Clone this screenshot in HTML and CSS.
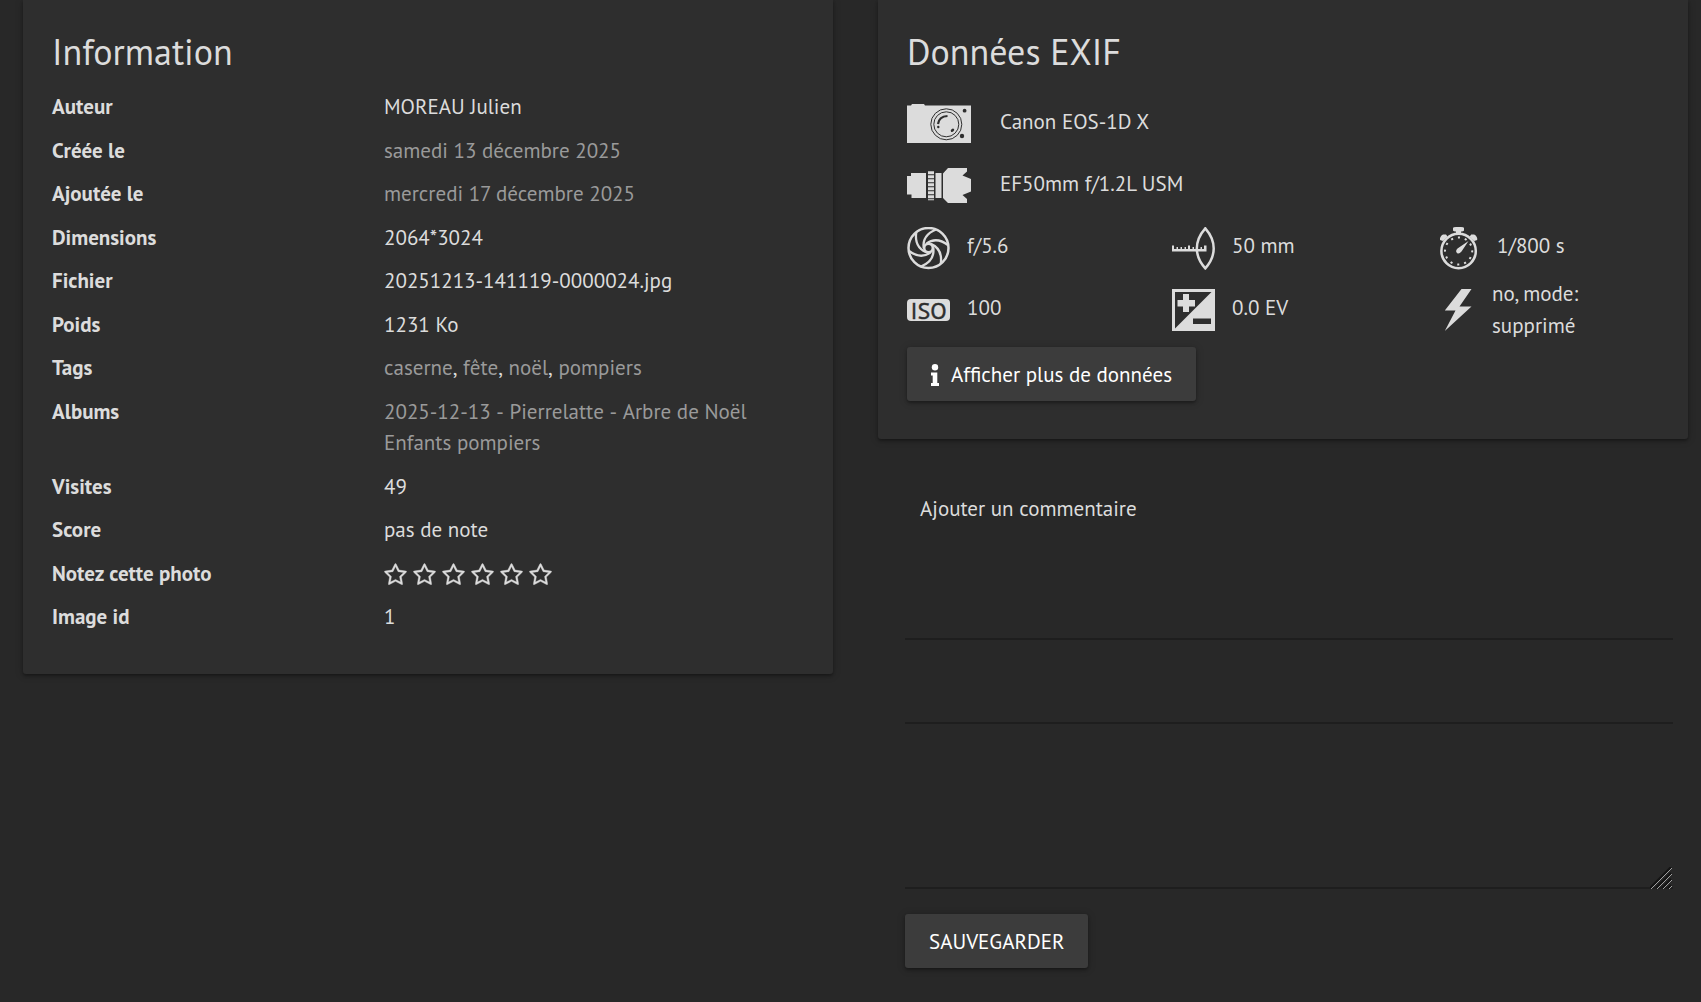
FILE: index.html
```html
<!DOCTYPE html>
<html lang="fr">
<head>
  <meta charset="utf-8">
  <meta name="viewport" content="width=device-width,initial-scale=1">
  <title>20251213-141119-0000024</title>
  <link rel="stylesheet" href="styles.css">
</head>
<body>

  <main class="infos">
    <section class="card">
      <h2>Information</h2>
      <dl class="details">
        <dt>Auteur</dt>
        <dd>MOREAU Julien</dd>
        <dt>Créée le</dt>
        <dd><a href="#">samedi 13 décembre 2025</a></dd>
        <dt>Ajoutée le</dt>
        <dd><a href="#">mercredi 17 décembre 2025</a></dd>
        <dt>Dimensions</dt>
        <dd>2064*3024</dd>
        <dt>Fichier</dt>
        <dd>20251213-141119-0000024.jpg</dd>
        <dt>Poids</dt>
        <dd>1231 Ko</dd>
        <dt>Tags</dt>
        <dd class="list"><a href="#">caserne</a>, <a href="#">fête</a>, <a href="#">noël</a>, <a href="#">pompiers</a></dd>
        <dt>Albums</dt>
        <dd class="list"><a href="#">2025-12-13 - Pierrelatte - Arbre de Noël Enfants pompiers</a></dd>
        <dt>Visites</dt>
        <dd>49</dd>
        <dt>Score</dt>
        <dd>pas de note</dd>
        <dt>Notez cette photo</dt>
        <dd class="rating">
          <button type="button" aria-label="0"><svg viewBox="0 0 1664 1792"><use href="#star"/></svg></button>
          <button type="button" aria-label="1"><svg viewBox="0 0 1664 1792"><use href="#star"/></svg></button>
          <button type="button" aria-label="2"><svg viewBox="0 0 1664 1792"><use href="#star"/></svg></button>
          <button type="button" aria-label="3"><svg viewBox="0 0 1664 1792"><use href="#star"/></svg></button>
          <button type="button" aria-label="4"><svg viewBox="0 0 1664 1792"><use href="#star"/></svg></button>
          <button type="button" aria-label="5"><svg viewBox="0 0 1664 1792"><use href="#star"/></svg></button>
        </dd>
        <dt>Image id</dt>
        <dd>1</dd>
      </dl>
    </section>

    <div class="column">
      <section class="card">
        <h2>Données EXIF</h2>

        <div class="exif">
          <div class="exif-row">
            <svg class="icon-wide" viewBox="0 0 64 40">
              <path class="fill" d="M0 1.500H4L5 0H17L18 1.500H64V39H0z"/>
              <g class="cut-line">
                <circle cx="39.300" cy="20.300" r="15.500"/>
                <circle cx="39.300" cy="20.300" r="12.500"/>
                <path stroke-width="2.200" d="M31 20Q32 12.500 40.500 12"/>
              </g>
              <g class="cut">
                <circle cx="31.300" cy="23" r="1.200"/>
                <ellipse cx="45.500" cy="26.300" rx="2" ry="1.400" transform="rotate(-45 45.500 26.300)"/>
                <circle cx="57.600" cy="6.700" r="1.900"/>
                <circle cx="55" cy="32" r="2.200"/>
              </g>
            </svg>
            <span class="exif-text">Canon EOS-1D X</span>
          </div>
          <div class="exif-row">
            <svg class="icon-wide" viewBox="0 -2 64 40">
              <path class="fill" d="M0 8H4V5H19V30H4.500V26.500H0zM28.500 5H34.500V30H28.500zM36 5.500L41 0H60V3.500L55.500 7.500L64 11V23.500L55.500 27L60 31V35H41L36 30z"/>
              <path class="ribs" d="M24 3.300V32.300"/>
            </svg>
            <span class="exif-text">EF50mm f/1.2L USM</span>
          </div>

          <div class="exif-grid">
            <div class="exif-row">
              <svg class="icon" viewBox="0 0 43 43">
                <g class="line" transform="translate(21.500 21)">
                  <circle r="20"/>
                  <circle r="4.300"/>
                  <g class="blades">
                    <path id="blade" d="M7.500 -18.500C-1 -15 -6 -9 -4.800 0"/>
                    <use href="#blade" transform="rotate(60)"/>
                    <use href="#blade" transform="rotate(120)"/>
                    <use href="#blade" transform="rotate(180)"/>
                    <use href="#blade" transform="rotate(240)"/>
                    <use href="#blade" transform="rotate(300)"/>
                  </g>
                </g>
              </svg>
              <span class="exif-text">f/5.6</span>
            </div>
            <div class="exif-row">
              <svg class="icon" viewBox="0 0 43 43">
                <path class="line" d="M33.300 1.300C22 14 22 29 33.300 41.300C44.500 29 44.500 14 33.300 1.300z"/>
                <path class="fill" d="M0 24.500V18.500H2V22H4.500V20H6V22H8.500V20H10V22H12.500V20H14V22H16V18.500H18V22H20.500V20H22V22H24.500V20H26V22H28.500V20H30V22H32V18.500H34.500V24.500z"/>
              </svg>
              <span class="exif-text">50 mm</span>
            </div>
            <div class="exif-row">
              <svg class="icon" viewBox="0 0 43 43">
                <circle class="line" cx="21.600" cy="24" r="17.200"/>
                <path class="fill" d="M16 1Q16 0 19 0H24Q27 0 27 1V3.500Q27 4 25 4.500H24V7.500H19V4.500H18Q16 4 16 3.500zM3 13Q2.500 9.500 6 7.500L9 7.500L10.500 9.500L6 14zM40.200 13Q40.700 9.500 37.200 7.500L34.200 7.500L32.700 9.500L37.200 14zM31.500 14L24.500 24.500Q22 27.500 20 26Q18 24 20.500 21.500z"/>
                <circle class="dots" cx="21.600" cy="24" r="13.600" pathLength="120"/>
              </svg>
              <span class="exif-text">1/800 s</span>
            </div>
            <div class="exif-row">
              <svg class="icon" viewBox="0 0 43 43">
                <rect class="fill" y="10" width="43" height="22" rx="4"/>
                <text class="iso" x="21.500" y="29.500">ISO</text>
              </svg>
              <span class="exif-text">100</span>
            </div>
            <div class="exif-row">
              <svg class="icon" viewBox="0 0 43 43">
                <path class="fill" fill-rule="evenodd" d="M0 0H43V42H0zM3 3V39.500L39.500 3zM21 29.500V35H39V29.500z"/>
                <path class="fill" d="M11 5H17V11H23V17.500H17V23H11V17.500H5.500V11H11z"/>
              </svg>
              <span class="exif-text">0.0 EV</span>
            </div>
            <div class="exif-row flash">
              <svg class="icon" viewBox="0 0 38 43">
                <path class="fill" d="M24.500 0H34.500L22.500 17.500H34.500L7.800 42L18.500 21.500H7.800z"/>
              </svg>
              <span class="exif-text">no, mode: supprimé</span>
            </div>
          </div>
        </div>

        <button type="button" class="btn">
          <svg class="icon-info" viewBox="0 0 8 22">
            <circle cx="4" cy="3.200" r="3.200"/>
            <path d="M0 8.500H6.300V19H8V22H0V19H1.700V11.500H0z"/>
          </svg>
          Afficher plus de données
        </button>
      </section>

      <section class="comments">
        <h3>Ajouter un commentaire</h3>
        <form>
          <input type="text" name="author" aria-label="Auteur">
          <input type="url" name="website" aria-label="Site web">
          <div class="message">
            <textarea name="content" aria-label="Commentaire"></textarea>
            <svg class="grip" viewBox="0 0 22 22">
              <path class="grip-shadow" d="M0 21L21 0M6 21L21 6M12 21L21 12M18 21L21 18"/>
              <path class="grip-light" d="M1 22L22 1M7 22L22 7M13 22L22 13M19 22L22 19"/>
            </svg>
          </div>
          <button type="button" class="btn">SAUVEGARDER</button>
        </form>
      </section>
    </div>
  </main>

  <svg class="sprite">
    <path id="star" d="M1137 1004l306-297-422-62-189-382-189 382-422 62 306 297-73 421 378-199 377 199zm527-357q0 22-26 48l-363 354 86 500q1 7 1 20 0 50-41 50-19 0-40-12l-449-236-449 236q-22 12-40 12-21 0-31.500-14.500t-10.500-35.500q0-6 2-20l86-500-364-354q-25-27-25-48 0-37 56-46l502-73 225-455q19-41 49-41t49 41l225 455 502 73q56 9 56 46z"/>
  </svg>

</body>
</html>
```
FILE: styles.css
```css
:root {
  --bg:      #282828;
  --card:    #2e2e2e;
  --button:  #3c3c3c;
  --line:    #1e1e1e;
  --text:    #dcdcdc;
  --link:    #9a9a9a;
}
* { margin:0; padding:0; box-sizing:border-box; }
body {
  font-family:"PT Sans",Lato,sans-serif;
  font-size:21px;
  line-height:1.5;
  background:var(--bg);
  color:var(--text);
}
a { color:var(--link); text-decoration:none; }
button, input, textarea { font:inherit; color:inherit; }
.sprite { display:none; }

.infos {
  display:grid;
  grid-template-columns:1fr 1fr;
  gap:45px;
  align-items:start;
  padding:0 13px 0 23px;
}
.card {
  background:var(--card);
  border-radius:0 0 3px 3px;
  padding:30px 29px 38px;
  box-shadow:0 2px 3px rgba(0,0,0,0.3), 0 1px 8px rgba(0,0,0,0.2);
}
h2 {
  font-size:36px;
  font-weight:400;
  line-height:44px;
  margin-bottom:17px;
}

/* liste des informations */
.details {
  display:grid;
  grid-template-columns:5fr 7fr;
  column-gap:32px;
  row-gap:12px;
  margin-bottom:3px;
}
.details dt { font-weight:700; }
.list { font-kerning:none; }
.rating {
  display:flex;
  align-items:center;
  gap:6px;
  padding-top:3px;
}
.rating button {
  display:flex;
  background:none;
  border:none;
  cursor:pointer;
}
.rating svg { width:23px; height:24px; fill:var(--text); stroke:var(--text); stroke-width:30px; }

/* données exif */
.exif { padding:2px 0 6px; }
.exif-row {
  display:flex;
  align-items:center;
  height:62px;
}
.exif-grid {
  display:grid;
  grid-template-columns:repeat(3,1fr);
  column-gap:43px;
}
.exif-text { padding-bottom:5px; }
.icon, .icon-wide { flex:none; height:43px; }
.icon { width:43px; margin-right:17px; }
.icon-wide { width:64px; height:40px; margin-right:29px; }
.flash .icon { width:38px; }
.flash .exif-text { padding-bottom:1px; }
.fill { fill:var(--text); }
.line { fill:none; stroke:var(--text); stroke-width:2.5px; }
.blades { stroke-width:2.3px; }
.cut { fill:var(--card); }
.cut-line { fill:none; stroke:var(--card); }
.ribs { stroke:var(--text); stroke-width:6px; stroke-dasharray:3 1; }
.dots { fill:none; stroke:var(--text); stroke-width:2px; stroke-dasharray:3 7; stroke-dashoffset:1; }
.iso { fill:var(--card); stroke:var(--card); stroke-width:0.4px; font-size:24px; text-anchor:middle; }

.btn {
  display:flex;
  align-items:center;
  height:54px;
  padding:1px 24px 0;
  background:var(--button);
  color:#fff;
  border:none;
  border-radius:3px;
  box-shadow:0 2px 3px rgba(0,0,0,0.3), 0 1px 8px rgba(0,0,0,0.2);
  cursor:pointer;
}
.icon-info { width:8px; height:22px; margin-right:12px; fill:#fff; }

/* commentaires */
.comments { padding:54px 15px 33px 27px; }
.comments h3 {
  font-size:21px;
  font-weight:400;
  line-height:32px;
  padding-left:15px;
  margin-bottom:70px;
}
.comments input, .comments textarea {
  display:block;
  width:100%;
  background:none;
  border:none;
  border-bottom:2px solid var(--line);
  outline:none;
}
.comments input { height:45px; margin-bottom:39px; }
.comments textarea { height:126px; resize:none; }
.message { position:relative; margin-bottom:25px; }
.grip {
  position:absolute;
  right:1px;
  bottom:0;
  width:22px;
  height:22px;
  fill:none;
}
.grip-shadow { stroke:#141414; stroke-width:2px; }
.grip-light { stroke:#a0a0a0; }
```
